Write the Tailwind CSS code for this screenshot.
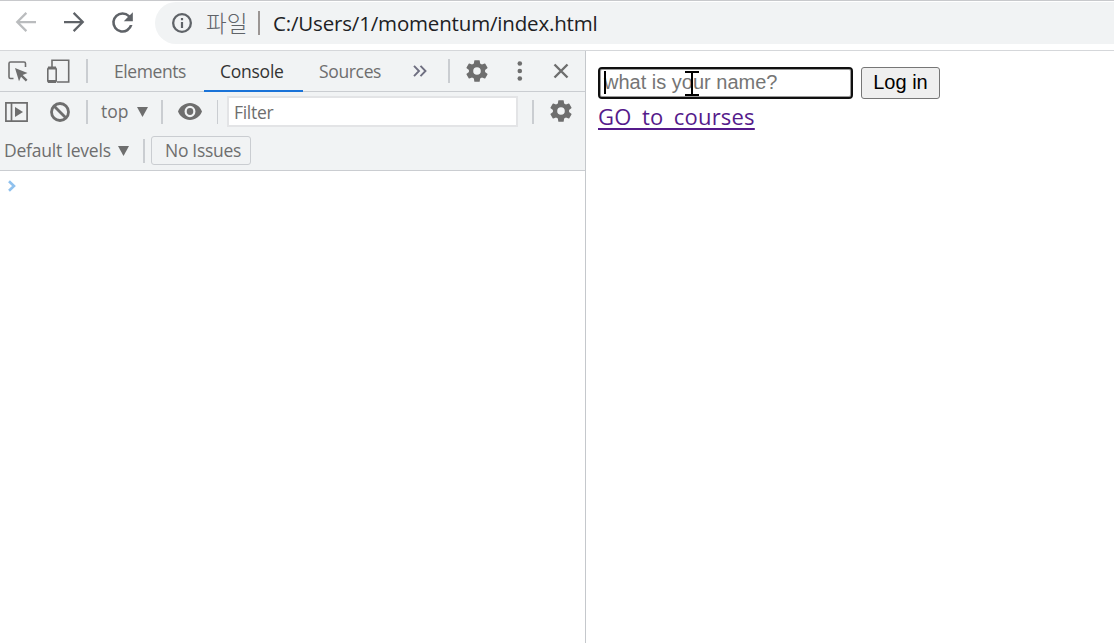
<!DOCTYPE html>
<html lang="ko">
<head>
  <meta charset="UTF-8" />
  <meta name="viewport" content="width=device-width, initial-scale=1.0" />
  <title>Momentum</title>
  <script src="https://cdn.jsdelivr.net/npm/@tailwindcss/browser@4"></script>
</head>
<body class="h-screen flex flex-col overflow-hidden bg-white font-['Open_Sans','Noto_Sans_CJK_KR',sans-serif] text-[#5f6368]">

  <!-- Browser toolbar -->
  <header class="h-[51px] shrink-0 flex items-start border-t border-[#c8c9cc] border-b border-b-[#d5d7da]">
    <svg class="w-[30px] h-[30px] mt-1.5 ml-[11px] text-[#babcbe]" viewBox="0 0 24 24" fill="none" stroke="currentColor" stroke-width="1.8"><path d="M20 12H5M12.3 4.7 5 12l7.3 7.3" /></svg>
    <svg class="w-[30px] h-[30px] mt-1.5 ml-[18px]" viewBox="0 0 24 24" fill="none" stroke="currentColor" stroke-width="1.8"><path d="M4 12h15M11.7 4.7 19 12l-7.3 7.3" /></svg>
    <svg class="w-[31px] h-[31px] mt-1.5 ml-[18px]" viewBox="0 0 24 24" fill="currentColor"><path d="M17.65 6.35A7.96 7.96 0 0 0 12 4a8 8 0 1 0 7.73 10h-2.08A6 6 0 1 1 12 6c1.66 0 3.14.69 4.22 1.78L13 11h7V4z" /></svg>
    <div class="h-[42px] mt-px ml-[17px] flex-1 flex items-center rounded-l-full bg-[#f1f3f4] pl-[15px]">
      <svg class="w-6 h-6 shrink-0" viewBox="0 0 24 24" fill="currentColor"><path d="M10.900 7h2.200v2.200h-2.200zm0 4h2.200v6h-2.200zM12 2a10 10 0 1 0 0 20 10 10 0 0 0 0-20zm0 17.700a7.700 7.700 0 1 1 0-15.400 7.700 7.700 0 0 1 0 15.400z" /></svg>
      <span class="ml-3 w-[42px] pb-px text-[22.5px] leading-none font-light font-['Noto_Sans_CJK_KR',sans-serif] whitespace-nowrap">파일</span>
      <span class="ml-[10px] w-0.5 h-6 bg-[#9b9694]"></span>
      <span class="ml-[13px] text-[20.5px] leading-none tracking-[-0.17px] text-[#202124] whitespace-nowrap">C:/Users/1/momentum/index.html</span>
    </div>
  </header>

  <div class="flex-1 flex min-h-0">
    <!-- DevTools -->
    <section class="w-[586px] shrink-0 border-r border-[#c5c8cc] text-[17.5px] leading-none">
      <div class="bg-[#f1f3f4] text-[#6e6e6e]">

        <!-- Panel tabs -->
        <div class="h-[41px] flex items-center border-b border-[#cacdd1]">
          <svg class="w-[22px] h-[22px] ml-[7px]" viewBox="0 0 22 22" fill="none" stroke="currentColor" stroke-width="1.6"><path d="M6.5 18.500H3.500A1.500 1.500 0 0 1 2 17V3.500A1.500 1.500 0 0 1 3.500 2h13.500A1.500 1.500 0 0 1 18.500 3.500V7" /><path d="m8 8 12.500 5-4.800 2 4.800 4.800-1.700 1.700-4.800-4.800-2 4.600z" fill="currentColor" stroke="none" /></svg>
          <svg class="w-6 h-[26px] ml-[17px]" viewBox="0 0 24 26" fill="none" stroke="currentColor" stroke-width="1.6"><path d="M6 9V2.300h16.700V24H11" /><rect x="1.800" y="10" width="8.400" height="14" rx="1" /><path d="M2 10h8M2 23.500h8" stroke-width="3" /></svg>
          <span class="w-0.5 h-6 ml-4 bg-[#cacdd1]"></span>
          <span class="w-[72px] ml-[26px] pt-0.5 tracking-[-0.42px] whitespace-nowrap">Elements</span>
          <span class="relative w-[99px] h-[41px] ml-[18px] pt-0.5 pl-4 flex items-center tracking-[-0.25px] whitespace-nowrap text-[#333] after:absolute after:left-0 after:bottom-0 after:w-[99px] after:h-0.5 after:bg-[#1a73d8]">Console</span>
          <span class="w-[63px] ml-4 pt-0.5 tracking-[-0.35px] whitespace-nowrap">Sources</span>
          <svg class="w-[14px] h-3 ml-[31px] mr-px text-[#6e6e80]" viewBox="0 0 14 12" fill="none" stroke="currentColor" stroke-width="1.9"><path d="m1 .8 5 5.200-5 5.200M7.500.8l5 5.200-5 5.200" /></svg>
          <span class="w-0.5 h-6 ml-5 bg-[#cacdd1]"></span>
          <svg class="w-[26px] h-[26px] ml-[14px]" viewBox="0 0 24 24" fill="currentColor"><path d="M19.430 12.980a7.800 7.800 0 0 0 0-1.960l2.110-1.650a.5.5 0 0 0 .12-.64l-2-3.460a.5.5 0 0 0-.61-.22l-2.490 1a7.300 7.300 0 0 0-1.690-.98l-.38-2.650A.49.49 0 0 0 14 2h-4a.49.49 0 0 0-.49.42l-.38 2.650c-.61.25-1.170.59-1.690.98l-2.490-1a.49.49 0 0 0-.61.22l-2 3.460a.49.49 0 0 0 .12.64l2.110 1.650a7.900 7.900 0 0 0 0 1.960l-2.110 1.650a.5.5 0 0 0-.12.64l2 3.460c.12.22.39.3.61.22l2.490-1c.52.4 1.080.73 1.690.98l.38 2.650c.03.24.24.42.49.42h4c.25 0 .46-.18.49-.42l.38-2.650c.61-.25 1.170-.59 1.690-.98l2.490 1c.23.09.49 0 .61-.22l2-3.460a.5.5 0 0 0-.12-.64zM12 15.500a3.500 3.500 0 1 1 0-7 3.500 3.500 0 0 1 0 7z" /></svg>
          <svg class="w-[6px] h-5 ml-[27px]" viewBox="0 0 6 20" fill="currentColor"><circle cx="2.800" cy="2.500" r="2.300" /><circle cx="2.800" cy="10" r="2.300" /><circle cx="2.800" cy="17.500" r="2.300" /></svg>
          <svg class="w-4 h-4 ml-[30px]" viewBox="0 0 16 16" fill="none" stroke="currentColor" stroke-width="2.400"><path d="m1.500 1.500 13 13M14.500 1.500l-13 13" /></svg>
        </div>

        <!-- Console toolbar -->
        <div class="h-[39px] flex items-center">
          <svg class="w-[23px] h-5 ml-[5px]" viewBox="0 0 23 20" fill="none" stroke="currentColor" stroke-width="1.700"><path d="M.9.9h21.200v18.200H.9zM6.500 1v18" /><path d="m10 5 8 5-8 5z" fill="currentColor" stroke="none" /></svg>
          <svg class="w-5 h-5 ml-[22px]" viewBox="0 0 20 20" fill="none" stroke="currentColor" stroke-width="2.800"><circle cx="10" cy="10" r="8.500" /><path d="m4 4 12 12" /></svg>
          <span class="w-0.5 h-6 ml-4 bg-[#cacdd1]"></span>
          <span class="w-[28px] ml-[13px] whitespace-nowrap">top</span>
          <svg class="w-[11px] h-[10px] ml-2" viewBox="0 0 11 10" fill="currentColor"><path d="M0 0h11L5.500 10z" /></svg>
          <span class="w-0.5 h-6 ml-[13px] bg-[#cacdd1]"></span>
          <svg class="w-6 h-[17px] ml-[15px]" viewBox="1 4.500 22 15" preserveAspectRatio="none" fill="currentColor"><path d="M12 4.500C7 4.500 2.730 7.610 1 12c1.730 4.390 6 7.500 11 7.500s9.270-3.110 11-7.500c-1.730-4.390-6-7.500-11-7.500zM12 17a5 5 0 1 1 0-10 5 5 0 0 1 0 10zm0-8a3 3 0 1 0 0 6 3 3 0 0 0 0-6z" /></svg>
          <span class="w-px h-6 ml-[15px] bg-[#cacdd1]"></span>
          <div class="w-[291px] h-[31px] ml-[9px] pt-0.5 flex items-center border-2 border-[#e3e4e6] bg-white pl-[5px] tracking-[-0.3px]">Filter</div>
          <span class="w-0.5 h-6 ml-[14px] bg-[#cacdd1]"></span>
          <svg class="w-[26px] h-[26px] -mt-px ml-[14px]" viewBox="0 0 24 24" fill="currentColor"><path d="M19.430 12.980a7.800 7.800 0 0 0 0-1.960l2.110-1.650a.5.5 0 0 0 .12-.64l-2-3.460a.5.5 0 0 0-.61-.22l-2.490 1a7.300 7.300 0 0 0-1.690-.98l-.38-2.650A.49.49 0 0 0 14 2h-4a.49.49 0 0 0-.49.42l-.38 2.650c-.61.25-1.170.59-1.690.98l-2.490-1a.49.49 0 0 0-.61.22l-2 3.460a.49.49 0 0 0 .12.64l2.110 1.650a7.900 7.900 0 0 0 0 1.960l-2.110 1.650a.5.5 0 0 0-.12.64l2 3.460c.12.22.39.3.61.22l2.490-1c.52.4 1.080.73 1.690.98l.38 2.650c.03.24.24.42.49.42h4c.25 0 .46-.18.49-.42l.38-2.650c.61-.25 1.170-.59 1.690-.98l2.490 1c.23.09.49 0 .61-.22l2-3.460a.5.5 0 0 0-.12-.64zM12 15.500a3.500 3.500 0 1 1 0-7 3.500 3.500 0 0 1 0 7z" /></svg>
        </div>

        <!-- Log levels -->
        <div class="h-10 flex items-center border-b border-[#cacdd1]">
          <span class="w-[107px] ml-1 pt-px tracking-[-0.2px] whitespace-nowrap">Default levels</span>
          <svg class="w-[11px] h-[10px] ml-[7px] mr-px" viewBox="0 0 11 10" fill="currentColor"><path d="M0 0h11L5.500 10z" /></svg>
          <span class="w-0.5 h-6 ml-[13px] bg-[#cacdd1]"></span>
          <div class="w-[100px] h-[29px] ml-1.5 pt-px pl-[13px] flex items-center rounded-[3px] border border-[#cacdd1] tracking-[-0.3px] whitespace-nowrap">No Issues</div>
        </div>
      </div>

      <!-- Prompt -->
      <svg class="w-2 h-3 ml-2 mt-[9px] text-[#8fc1ee]" viewBox="0 0 8 12" fill="none" stroke="currentColor" stroke-width="2.600"><path d="m1 1.200 5 4.800-5 4.800" /></svg>
    </section>

    <!-- Page -->
    <main class="flex-1 pt-4 pl-3">
      <div class="flex items-center font-['Liberation_Sans',Arial,sans-serif] text-[20px] leading-none">
        <div class="relative w-[255px] h-8 flex items-center rounded-[4px] border-2 border-[#101010] inset-ring inset-ring-[#9a9a9a] pl-1 pb-0.5 text-[#757575]">
          <span class="whitespace-nowrap">what is your name?</span>
          <span class="absolute left-1 top-0.5 w-0.5 h-[23px] bg-black"></span>
          <!-- I-beam pointer -->
          <svg class="absolute left-[85px] top-0.5 w-[14px] h-[26px]" viewBox="0 0 14 26" fill="none" stroke="#000" stroke-width="2"><path d="M0 1h14M0 24h14M7 1v23" /></svg>
        </div>
        <button class="w-[79px] h-8 ml-2 pb-0.5 rounded-[3px] border border-[#767676] bg-[#efefef] text-black whitespace-nowrap">Log in</button>
      </div>
      <a href="#" class="inline-block mt-1.5 text-[22px] leading-none tracking-[0.2px] [word-spacing:4.5px] text-[#551a8b] underline underline-offset-[3px] whitespace-nowrap">GO to courses</a>
    </main>
  </div>
</body>
</html>
